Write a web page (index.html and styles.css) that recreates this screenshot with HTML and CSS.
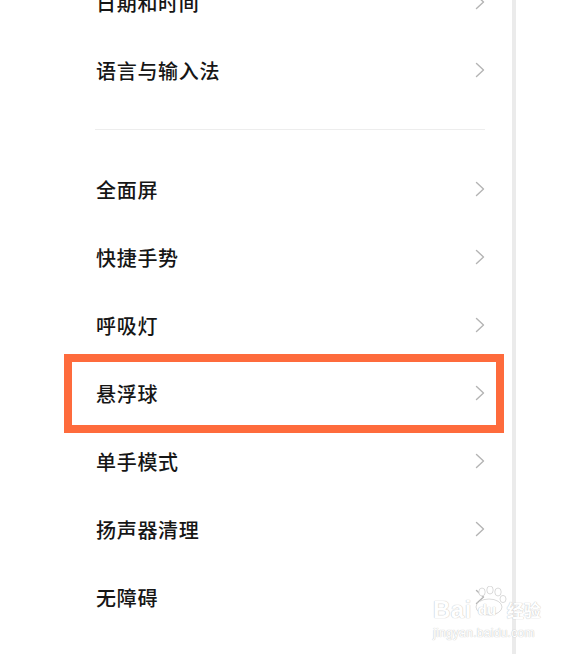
FILE: index.html
```html
<!DOCTYPE html>
<html lang="zh-CN">
<head>
<meta charset="utf-8">
<title>更多设置</title>
<link rel="stylesheet" href="styles.css">
</head>
<body>
<div class="page">
  <div class="screen">
    <ul class="list">
      <li class="row"><span class="label">日期和时间</span><svg class="chev" viewBox="0 0 10 16"><polyline points="1.5,1.5 8.5,8 1.5,14.5"/></svg></li>
      <li class="row"><span class="label">语言与输入法</span><svg class="chev" viewBox="0 0 10 16"><polyline points="1.5,1.5 8.5,8 1.5,14.5"/></svg></li>
    </ul>
    <div class="sep"><div class="sep-line"></div></div>
    <ul class="list">
      <li class="row"><span class="label">全面屏</span><svg class="chev" viewBox="0 0 10 16"><polyline points="1.5,1.5 8.5,8 1.5,14.5"/></svg></li>
      <li class="row"><span class="label">快捷手势</span><svg class="chev" viewBox="0 0 10 16"><polyline points="1.5,1.5 8.5,8 1.5,14.5"/></svg></li>
      <li class="row"><span class="label">呼吸灯</span><svg class="chev" viewBox="0 0 10 16"><polyline points="1.5,1.5 8.5,8 1.5,14.5"/></svg></li>
      <li class="row highlighted"><span class="label">悬浮球</span><svg class="chev" viewBox="0 0 10 16"><polyline points="1.5,1.5 8.5,8 1.5,14.5"/></svg><span class="mark"></span></li>
      <li class="row"><span class="label">单手模式</span><svg class="chev" viewBox="0 0 10 16"><polyline points="1.5,1.5 8.5,8 1.5,14.5"/></svg></li>
      <li class="row"><span class="label">扬声器清理</span><svg class="chev" viewBox="0 0 10 16"><polyline points="1.5,1.5 8.5,8 1.5,14.5"/></svg></li>
      <li class="row"><span class="label">无障碍</span><svg class="chev" viewBox="0 0 10 16"><polyline points="1.5,1.5 8.5,8 1.5,14.5"/></svg></li>
      <li class="row"><span class="label">开发者选项</span><svg class="chev" viewBox="0 0 10 16"><polyline points="1.5,1.5 8.5,8 1.5,14.5"/></svg></li>
    </ul>
  </div>
  <div class="edge"></div>
  <div class="rest"></div>
  <div class="watermark">
    <div class="wm-top">
      <span class="wm-bai">Bai</span>
      <span class="wm-paw">
        <svg class="paw" viewBox="0 0 34 30">
          <ellipse cx="9" cy="6" rx="3.2" ry="4"/>
          <ellipse cx="17" cy="4" rx="3.2" ry="4"/>
          <ellipse cx="25" cy="6" rx="3.2" ry="4"/>
          <ellipse cx="30" cy="13" rx="3" ry="3.6"/>
          <ellipse cx="16" cy="21" rx="13" ry="8"/>
        </svg>
        <span class="wm-du">du</span>
      </span>
      <span class="wm-jy">经验</span>
    </div>
    <div class="wm-url">jingyan.baidu.com</div>
  </div>
</div>
</body>
</html>
```

FILE: styles.css
```css
html, body {
  margin: 0;
  padding: 0;
  background: #ffffff;
}

body {
  width: 567px;
  height: 654px;
  overflow: hidden;
  font-family: "Noto Sans CJK SC", "Noto Sans", sans-serif;
}

.page {
  position: relative;
  display: flex;
  width: 567px;
  height: 654px;
  overflow: hidden;
}

.screen {
  flex: 0 0 512px;
  margin-top: -32px;
}

.edge {
  flex: 0 0 4px;
  background: #ebebeb;
}

.rest {
  flex: 1;
  background: #ffffff;
}

.list {
  list-style: none;
  margin: 0;
  padding: 0;
}

.row {
  position: relative;
  display: flex;
  align-items: center;
  justify-content: space-between;
  height: 68px;
  padding: 0 27px 0 96px;
}

.label {
  font-size: 20px;
  font-weight: 500;
  letter-spacing: 0.7px;
  color: #161616;
}

.chev {
  width: 10px;
  height: 16px;
  fill: none;
  stroke: #b4b4b4;
  stroke-width: 1.4;
  stroke-linecap: round;
  stroke-linejoin: round;
}

.sep {
  padding: 25px 27px 25px 95px;
}

.sep-line {
  height: 1px;
  background: #ededed;
}

.mark {
  position: absolute;
  left: 64px;
  right: 8px;
  top: -5px;
  bottom: -6px;
  border: 8px solid #fe6b3c;
  pointer-events: none;
}

.watermark {
  position: absolute;
  left: 433px;
  top: 586px;
  width: 110px;
  color: #ffffff;
  font-family: "Liberation Sans", Arial, sans-serif;
  text-shadow: 0 0 1px #c8c8c8, 0 0 1px #c8c8c8;
}

.wm-top {
  display: flex;
  align-items: flex-end;
  height: 36px;
}

.wm-bai {
  font-size: 24px;
  font-weight: 700;
  line-height: 24px;
  letter-spacing: 0.5px;
}

.wm-paw {
  position: relative;
  width: 34px;
  height: 36px;
  margin-left: 1px;
}

.paw {
  position: absolute;
  left: 0;
  top: 0;
  width: 34px;
  height: 30px;
  fill: #ffffff;
  stroke: #d0d0d0;
  stroke-width: 0.8;
}

.wm-du {
  position: absolute;
  left: 5px;
  bottom: 4px;
  font-size: 15px;
  font-weight: 700;
  line-height: 16px;
}

.wm-jy {
  font-family: "Noto Sans CJK SC", sans-serif;
  font-size: 17px;
  font-weight: 700;
  line-height: 24px;
}

.wm-url {
  margin-top: 4px;
  font-size: 12px;
  line-height: 14px;
  letter-spacing: 0.3px;
}
```
